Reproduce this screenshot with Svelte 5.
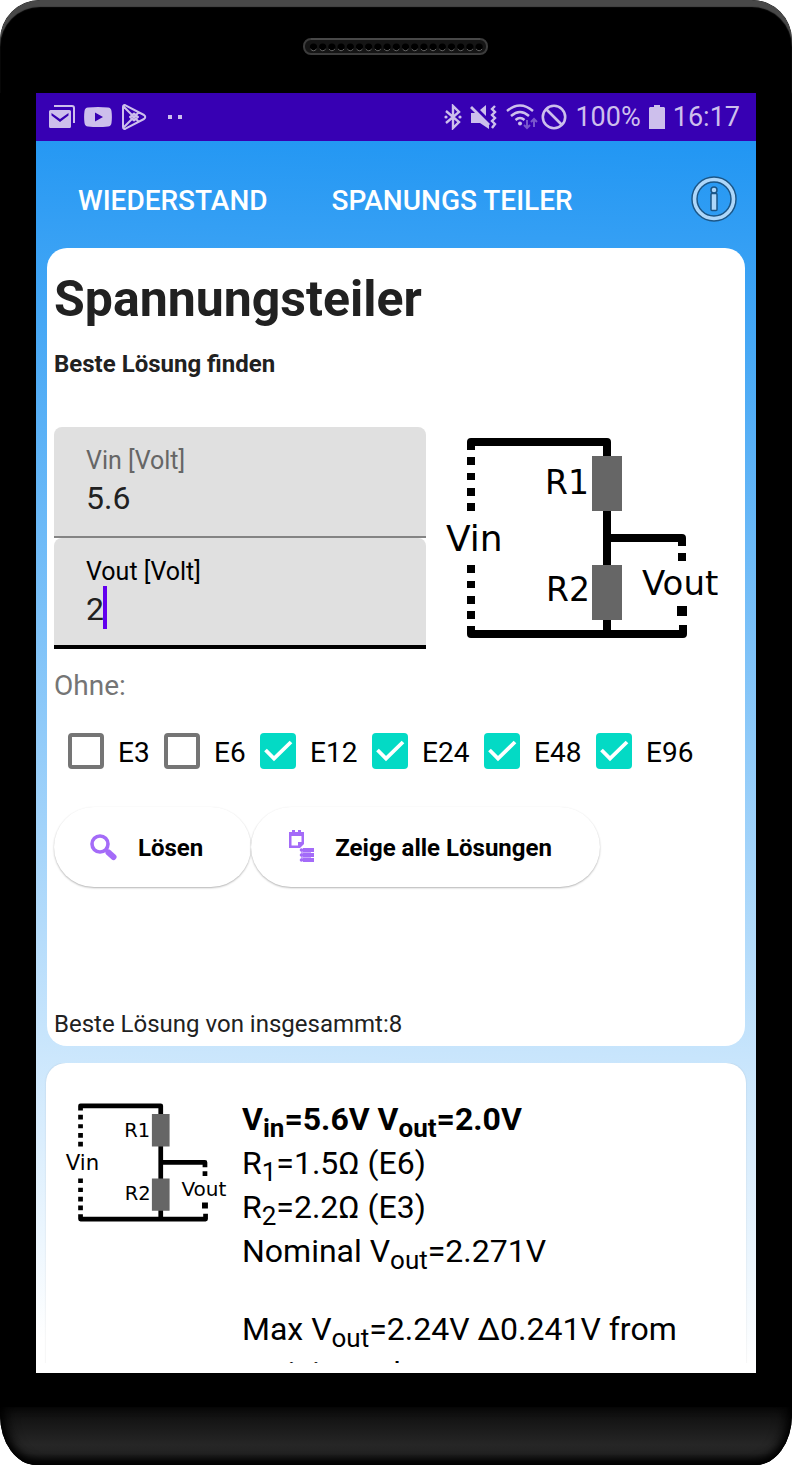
<script>
  let vin = $state('5.6');
  let vout = $state('2');
  let series = $state([
    { name: 'E3', checked: false },
    { name: 'E6', checked: false },
    { name: 'E12', checked: true },
    { name: 'E24', checked: true },
    { name: 'E48', checked: true },
    { name: 'E96', checked: true }
  ]);
  const holes = Array.from({ length: 19 }, (_, i) => i);
</script>

{#snippet circuit()}
  <svg class="circuit" viewBox="426 427 312 222" role="img" aria-label="R1 R2 Vin Vout">
    <g fill="none" stroke="#000" stroke-width="8" stroke-linejoin="round">
      <path d="M471 450V442H607V634" />
      <path d="M607 538H682V546" />
      <path d="M471 626V634H683V625" />
    </g>
    <path d="M467 457h8v8h-8zM467 473h8v7h-8zM467 488h8v8h-8zM467 503h8v8h-8zM467 565h8v8h-8zM467 581h8v7h-8zM467 596h8v8h-8zM467 611h8v8h-8zM678 553h8v8h-8zM677 606h10v10h-10z" />
    <path fill="#666" d="M592 456h30v55h-30zM592 565h30v55h-30z" />
    <g font-family="'DejaVu Sans', sans-serif" font-size="34">
      <text x="545" y="494" font-size="33">R1</text>
      <text x="546" y="601" font-size="33">R2</text>
      <text x="446" y="551" font-size="36">Vin</text>
      <text x="642" y="595">Vout</text>
    </g>
  </svg>
{/snippet}

<div class="phone">
  <div class="bezel">
    <svg class="speaker" viewBox="0 0 185 17" aria-hidden="true">
      <rect x="1" y="1" width="183" height="15" rx="7" fill="#151515" stroke="#3c3c3c" stroke-width="2" />
      <path d="M8 1H177" stroke="#555" stroke-width="1" />
      {#each holes as i}
        <circle cx={10.500 + i * 9.2} cy="9" r="3.600" fill="#000" />
        <path d="M{7.5 + i * 9.2} 11q3 3.500 6 0" fill="none" stroke="#666" stroke-width="1" />
      {/each}
    </svg>
  </div>

  <main class="screen">
    <div class="status">
      <div class="notices">
        <svg width="26" height="24" viewBox="0 0 26 24">
          <path d="M5 1H23Q25 1 25 3V18" fill="none" stroke="currentColor" stroke-width="2" />
          <path fill="currentColor" fill-rule="evenodd" d="M1.500 5h19Q22 5 22 6.500v15Q22 23 20.500 23h-19Q0 23 0 21.500v-15Q0 5 1.500 5zM2.500 8v2.500L11 17l8.500-6.500V8L11 14z" />
        </svg>
        <svg width="28" height="20" viewBox="0 0 28 20">
          <path fill="currentColor" fill-rule="evenodd" d="M4 .5Q14-.5 24 .5 27 .8 27.500 4 28.300 10 27.500 16 27 19.200 24 19.500 14 20.500 4 19.500 1 19.200.5 16-.3 10 .5 4 1 .8 4 .5zM11 5.500v9l8-4.500z" />
        </svg>
        <svg width="26" height="26" viewBox="0 0 26 26" fill="none" stroke="currentColor" stroke-width="2" stroke-linejoin="round">
          <path d="M2 3Q2 .5 4.500 1.300L23 11Q25.500 13 23 15L4.500 24.700Q2 25.500 2 23zM2.500 2.500 18 18M2.500 23.500 18 8M13 9.500l4 3.500-4 3.500L9 13z" />
        </svg>
        <svg width="16" height="4" viewBox="0 0 16 4" class="dots"><path fill="currentColor" d="M0 0h4v4H0zM10 0h4v4h-4z" /></svg>
      </div>
      <div class="system">
        <svg width="18" height="26" viewBox="0 0 18 26"><path d="M2 7l13 11-6 6V2l6 6L2 19" fill="none" stroke="currentColor" stroke-width="2.400" /><circle cx="2" cy="13" r="1.600" fill="currentColor" /><circle cx="16" cy="13" r="1.600" fill="currentColor" /></svg>
        <svg width="28" height="24" viewBox="0 0 28 24">
          <path fill="currentColor" d="M1 8h6l12 11v5l-9-6H1zM16 0v11l-6-6zM0 3l2-2 18 18-2 2z" />
          <path d="M25 1l-3 3 3 3-3 3 3 3-3 3 3 3-3 4" fill="none" stroke="currentColor" stroke-width="2.400" />
        </svg>
        <svg class="wifi" width="32" height="26" viewBox="0 0 32 26">
          <path d="M1 7Q14-4 27 7M5 12Q14 4 23 12M9.500 16Q14 12 18.500 16" fill="none" stroke="currentColor" stroke-width="2.400" />
          <circle cx="14" cy="19.500" r="2" fill="currentColor" />
          <path d="M21 16v8m-3-3 3 3 3-3M28 23v-8m-3 3 3-3 3 3" fill="none" stroke="currentColor" stroke-width="2" opacity=".45" />
        </svg>
        <svg width="26" height="26" viewBox="0 0 26 26"><g fill="none" stroke="currentColor" stroke-width="2.600"><circle cx="13" cy="13" r="11.200" /><path d="M5 5l16 16" /></g></svg>
        <span>100%</span>
        <svg width="16" height="24" viewBox="0 0 16 24"><path fill="currentColor" d="M5 0h6v2h4l1 1v21H0V3l1-1h4z" /></svg>
        <span>16:17</span>
      </div>
    </div>

    <nav class="tabs">
      <button class="tab">WIEDERSTAND</button>
      <button class="tab">SPANUNGS TEILER</button>
      <button class="info" aria-label="Info">
        <svg width="46" height="46" viewBox="0 0 46 46">
          <circle cx="23" cy="23" r="19.500" fill="none" stroke="#1b5687" stroke-width="6.500" />
          <circle cx="23" cy="23" r="19.500" fill="none" stroke="#add7fa" stroke-width="3.600" />
          <circle cx="23" cy="14" r="3" fill="#add7fa" stroke="#1b5687" stroke-width="1.500" />
          <rect x="20" y="17.500" width="6" height="17" rx="1" fill="#add7fa" stroke="#1b5687" stroke-width="1.500" />
        </svg>
      </button>
    </nav>

    <section class="card">
      <h1>Spannungsteiler</h1>
      <h2>Beste Lösung finden</h2>

      <div class="entry">
        <div class="fields">
          <div class="field">
            <label for="vin">Vin [Volt]</label>
            <input id="vin" type="text" inputmode="decimal" bind:value={vin} />
          </div>
          <div class="field active">
            <label for="vout">Vout [Volt]</label>
            <div class="edit">
              <input id="vout" type="text" inputmode="decimal" bind:value={vout} />
              <span class="caret"></span>
            </div>
          </div>
        </div>
        {@render circuit()}
      </div>

      <p class="without">Ohne:</p>
      <div class="series">
        {#each series as s}
          <label><input type="checkbox" bind:checked={s.checked} /><span>{s.name}</span></label>
        {/each}
      </div>

      <div class="actions">
        <button>
          <svg width="32" height="32" viewBox="0 0 32 32" fill="none" stroke="#a46bf8">
            <circle cx="14" cy="13" r="8" stroke-width="3.600" />
            <path d="M19 18l4 4" stroke-width="3" />
            <path d="M22.500 21.500l5 4.500" stroke-width="6" stroke-linecap="round" />
          </svg>
          <span>Lösen</span>
        </button>
        <button>
          <svg width="32" height="32" viewBox="0 0 32 32" fill="#a46bf8">
            <path fill-rule="evenodd" d="M6 1h3v-2h3v2h3v-2h3v2h3v12l-4 4H6zM8.500 5v9.500H15V11h3.500V5z" />
            <path d="M20 17h11v4H20zM20 22h11v4H20zM20 27h11v4H20z" />
            <path d="M18 18h10v12H18z" opacity=".6" />
            <circle cx="18.500" cy="19" r="1.800" /><circle cx="18.500" cy="24" r="1.800" /><circle cx="18.500" cy="29" r="1.800" />
          </svg>
          <span>Zeige alle Lösungen</span>
        </button>
      </div>

      <p class="summary">Beste Lösung von insgesammt:8</p>
    </section>

    <div class="results">
      <article class="card result">
        {@render circuit()}
        <div class="values">
          <p><b>V<sub>in</sub>=5.6V V<sub>out</sub>=2.0V</b></p>
          <p>R<sub>1</sub>=1.5Ω (E6)</p>
          <p>R<sub>2</sub>=2.2Ω (E3)</p>
          <p>Nominal V<sub>out</sub>=2.271V</p>
          <p class="range">Max V<sub>out</sub>=2.24V Δ0.241V from anticipated.</p>
        </div>
      </article>
    </div>
  </main>
  <div class="lip"></div>
  <div class="chin"></div>
</div>

<style>
  :global(body) {
    margin: 0;
    background: #fff;
  }

  .phone, .phone * {
    box-sizing: border-box;
  }

  .phone {
    height: 100vh;
    display: flex;
    flex-direction: column;
    overflow: hidden;
    border-radius: 40px 40px 36px 36px / 40px 40px 50px 50px;
    background: #000;
    font-family: Roboto, sans-serif;
    color: #000;
  }

  .bezel {
    flex: none;
    height: 93px;
    display: flex;
    justify-content: center;
    padding: 38px 2px 0 0;
    border-radius: 40px 40px 0 0;
    box-shadow: inset 0 7px 1px #484848;
  }

  .speaker {
    width: 185px;
    height: 17px;
  }

  .screen {
    flex: 1;
    min-height: 0;
    margin: 0 36px;
    padding-bottom: 10px;
    display: flex;
    flex-direction: column;
    background: linear-gradient(182deg, #2196f3 48px, #fff 1270px);
  }

  .lip {
    flex: none;
    height: 34px;
  }

  .chin {
    flex: none;
    height: 58px;
    border-radius: 0 0 36px 36px / 0 0 50px 50px;
    background: linear-gradient(#0c0c0c, #262626 65%, #222 80%, #0a0a0a);
    box-shadow: inset 0 -4px 8px #000, inset 10px 0 14px -6px #000, inset -10px 0 14px -6px #000;
  }

  .status {
    flex: none;
    height: 48px;
    padding: 0 16px 0 13px;
    display: flex;
    align-items: center;
    justify-content: space-between;
    background: #3700b3;
    color: #cdbfec;
    font-size: 27px;
  }

  .notices, .system {
    display: flex;
    align-items: center;
  }

  .notices {
    gap: 9px;
  }

  .dots {
    margin-left: 12px;
  }

  .system {
    gap: 8px;
  }

  .wifi {
    margin-right: -5px;
  }

  .status svg {
    display: block;
  }

  button {
    border: 0;
    background: none;
    padding: 0;
    font-family: inherit;
    color: inherit;
  }

  .tabs {
    flex: none;
    height: 107px;
    padding: 8px 19px 0 42px;
    display: flex;
    align-items: center;
    gap: 64px;
  }

  .tab {
    padding-top: 4px;
    font-size: 28px;
    font-weight: 500;
    color: #fff;
  }

  .info {
    margin-left: auto;
  }

  .info svg {
    display: block;
  }

  .card {
    flex: none;
    margin: 0 11px;
    padding: 21px 7px 8px;
    border-radius: 20px;
    background: #fff;
  }

  h1, h2, p {
    margin: 0;
  }

  h1 {
    font-size: 50px;
    line-height: 60px;
    color: #212121;
  }

  h2 {
    margin: 21px 0 49px;
    font-size: 24px;
    line-height: 28px;
    color: #212121;
  }

  .entry {
    display: grid;
    grid-template-columns: 372fr 312fr;
  }

  .circuit {
    display: block;
    width: 100%;
  }

  .field {
    height: 111px;
    padding: 20px 32px 0;
    border-bottom: 2px solid #848484;
    border-radius: 8px 8px 0 0;
    background: #e0e0e0;
  }

  .field label {
    display: block;
    margin-bottom: 4px;
    font-size: 25px;
    line-height: 28px;
    color: #666;
  }

  .field input {
    display: block;
    width: 100%;
    height: 38px;
    padding: 0;
    border: 0;
    outline: 0;
    background: none;
    font: 32px Roboto, sans-serif;
    color: #212121;
  }

  .field.active {
    border-bottom: 4px solid #000;
  }

  .active label {
    color: #000;
  }

  .edit {
    position: relative;
  }

  .caret {
    position: absolute;
    left: 17px;
    top: -4px;
    width: 4px;
    height: 43px;
    background: #6200ee;
  }

  .without {
    margin: 21px 0 31px;
    font-size: 28px;
    line-height: 32px;
    color: #757575;
  }

  .series {
    display: grid;
    grid-template-columns: repeat(2, 96px) repeat(4, 112px);
    padding-left: 14px;
  }

  .series label {
    display: flex;
    align-items: center;
    gap: 14px;
    height: 36px;
    font-size: 28px;
  }

  .series span, .actions span {
    padding-top: 2px;
  }

  .series input {
    appearance: none;
    flex: none;
    width: 36px;
    height: 36px;
    margin: 0;
    border: 4px solid #757575;
    border-radius: 4px;
  }

  .series input:checked {
    border: 0;
    background: #03dac5 url("data:image/svg+xml,%3Csvg xmlns='http://www.w3.org/2000/svg' viewBox='0 0 36 36'%3E%3Cpath d='M5.500 17l8.500 8.500L31 9' fill='none' stroke='white' stroke-width='3.800'/%3E%3C/svg%3E");
  }

  .actions {
    display: flex;
    margin-top: 38px;
  }

  .actions button {
    display: flex;
    align-items: center;
    gap: 20px;
    height: 80px;
    padding: 0 48px 0 32px;
    border-radius: 40px;
    background: #fff;
    box-shadow: 0 1px 2px rgb(0 0 0 / 30%);
    font-size: 24px;
    font-weight: 700;
  }

  .actions svg {
    overflow: visible;
  }

  .summary {
    margin-top: 123px;
    font-size: 24px;
    line-height: 28px;
    color: #212121;
  }

  .results {
    flex: 1;
    min-height: 0;
    margin-top: 17px;
    overflow: hidden;
  }

  .result {
    margin: 0 10px;
    padding: 34px 8px;
    display: grid;
    grid-template-columns: 184px 1fr;
    gap: 4px;
    align-items: start;
    box-shadow: 0 0 2px rgb(0 0 0 / 12%);
  }

  .values {
    padding-right: 40px;
    font-size: 32px;
    line-height: 44px;
  }

  sub {
    font-size: 26px;
    line-height: 0;
    vertical-align: -7px;
  }

  .range {
    margin-top: 34px;
  }
</style>
